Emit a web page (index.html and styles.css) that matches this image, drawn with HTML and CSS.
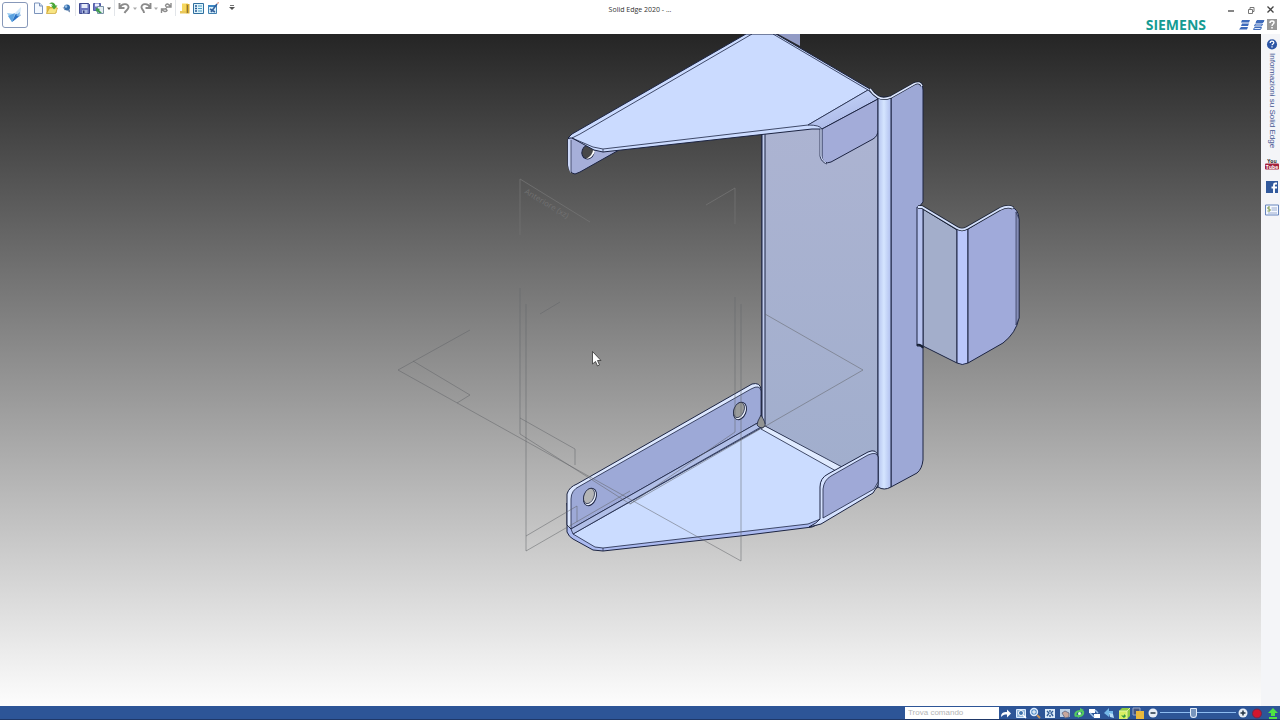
FILE: index.html
```html
<!DOCTYPE html>
<html lang="it">
<head>
<meta charset="utf-8">
<title>Solid Edge 2020</title>
<link rel="stylesheet" href="styles.css">
</head>
<body>
<header class="topbar">
  <div class="tools">
    <button class="app-button" aria-label="Menu applicazione">
      <svg width="24" height="24" viewBox="0 0 24 24"><path d="M4 10l8 1 1 5-4 3z" fill="#9ccdf2"/><path d="M5 13l7-3-3 9z" fill="#5ba2e0"/><path d="M9 19l4-9 5 2z" fill="#2a6fc2"/><path d="M12 10l6-6-1 9z" fill="#cfe7fa"/><path d="M13 12l4-3-1 5z" fill="#7db6e8"/></svg>
    </button>
    <div class="quick" role="toolbar" aria-label="Accesso rapido">
      <button class="tool" aria-label="Nuovo"><svg viewBox="0 0 14 14"><path d="M3.500 2h5l3 3v7.500h-8z" fill="#f4f9ff" stroke="#7b93bb"/><path d="M8.500 2v3h3" fill="#cfe0f5" stroke="#7b93bb"/></svg></button>
      <button class="tool" aria-label="Apri"><svg viewBox="0 0 14 14"><path d="M1.500 12.500V5h3l1 1h6v6z" fill="#e2b93c"/><path d="M1.500 12.500l3-5.500h8l-2 5.500z" fill="#f8e583" stroke="#c39a2e" stroke-width=".6"/><path d="M4 3c3-3 6-1 6.500 1.500h2L9 8.500 6 4.500h2C7 3 6 2.500 4 3z" fill="#48a636"/></svg></button>
      <button class="tool" aria-label="Solid Edge Portal"><svg viewBox="0 0 14 14"><circle cx="8" cy="6.500" r="3" fill="#356fad"/><circle cx="7" cy="5.500" r="1.300" fill="#9cc4e9"/><path d="M3.500 6l2.500 1v2.500zM8 9.500l3-1v3z" fill="#7991b3"/></svg></button>
      <i class="divider"></i>
      <button class="tool" aria-label="Salva"><svg viewBox="0 0 14 14"><path d="M1.500 2.500h9l1 1v9h-10z" fill="#6b75bd" stroke="#3f498f"/><path d="M3.500 3h6v4h-6z" fill="#e6ecf8"/><path d="M4 9h5.500v3.500H4z" fill="#a9b6dc"/><path d="M5 9.500h1.500v2.500H5z" fill="#343d7e"/></svg></button>
      <button class="tool" aria-label="Salva con nome"><svg viewBox="0 0 14 14"><path d="M1.500 2.500h7v7h-7z" fill="#6b75bd" stroke="#525ea6"/><path d="M3 2.500h4v3H3z" fill="#eef"/><path d="M5.500 5.500h6v7h-6z" fill="#e4edf2" stroke="#7b93a6"/><path d="M4 7l4 1-1 1 3 3h-3L5 10 4 11z" fill="#3c9a4b"/></svg></button>
      <button class="caret" aria-label="Opzioni di salvataggio"><svg viewBox="0 0 6 14"><path d="M1 6.500h4L3 9z" fill="#555"/></svg></button>
      <i class="divider"></i>
      <button class="tool" aria-label="Annulla"><svg viewBox="0 0 14 14" fill="none" stroke="#8b8b8b" stroke-width="1.900"><path d="M2.500 2v5h5M3 6.500c2-5 9-4 8.500 0C11 9 9 9 7.500 12"/></svg></button>
      <button class="caret wide" aria-label="Elenco annulla"><svg viewBox="0 0 6 14"><path d="M1 6.500h4L3 9z" fill="#aaa"/></svg></button>
      <button class="tool" aria-label="Ripeti"><svg viewBox="0 0 14 14" fill="none" stroke="#8b8b8b" stroke-width="1.900"><path d="M11.500 2v5h-5M11 6.500C9 1.500 2 2.500 2.500 6.500 3 9 5 9 5 12"/></svg></button>
      <button class="caret" aria-label="Elenco ripeti"><svg viewBox="0 0 6 14"><path d="M1 6.500h4L3 9z" fill="#aaa"/></svg></button>
      <button class="tool" aria-label="Collegamenti"><svg viewBox="0 0 14 14" fill="none" stroke="#8b8b8b" stroke-width="1.400"><path d="M12 2v4H8M11.500 5.500Q8 1 6.500 4.500L8 7M2.500 12V8h4M3 8.500Q6 12 8 9.500L6.500 7"/></svg></button>
      <i class="divider"></i>
      <button class="tool" aria-label="Misura"><svg viewBox="0 0 14 14"><path d="M4 2.500h6v9H4z" fill="#f6d860"/><path d="M8 3h3.500v9.500H8z" fill="#d9ae30"/><path d="M2 10h6v2.500H2z" fill="#e9c75a"/><path d="M9.500 4v8" stroke="#8d7736"/></svg></button>
      <button class="tool" aria-label="Proprietà"><svg viewBox="0 0 14 14"><path d="M1.500 2.500h10v10h-10z" fill="#dff3fb" stroke="#2f6f9f"/><path d="M3 5h2M3 7.500h2M3 10h2" stroke="#285b94" stroke-width="1.300"/><path d="M6 5h4M6 7.500h4M6 10h4" stroke="#4b9cc4"/></svg></button>
      <button class="tool" aria-label="Modifica"><svg viewBox="0 0 14 14"><path d="M2.500 4.500h8v8h-8z" fill="#d7effa" stroke="#4281b1"/><path d="M2 4h9v2H2z" fill="#3d87c3"/><path d="M4 8l5 3M5 11l6-8" fill="none" stroke="#35609a" stroke-width="1.600"/><path d="M11 3l1-2 1 1z" fill="#c75a3c"/></svg></button>
      <button class="caret last" aria-label="Personalizza"><svg viewBox="0 0 6 14"><path d="M1 4.500h4" stroke="#777"/><path d="M0 6h6L3 9z" fill="#555"/></svg></button>
    </div>
  </div>
  <h1 class="title">Solid Edge 2020 - ...</h1>
  <div class="corner">
    <div class="window-buttons">
      <button class="tool" aria-label="Riduci"><svg viewBox="0 0 14 14"><path d="M5 9h6" stroke="#444" stroke-width="1.300"/></svg></button>
      <button class="tool" aria-label="Ripristina"><svg viewBox="0 0 14 14" fill="none" stroke="#777"><path d="M5.500 7.500h4v4h-4zM7 7V5.500h4V9.500h-1"/></svg></button>
      <button class="tool" aria-label="Chiudi"><svg viewBox="0 0 14 14"><path d="M4.500 4.500l6 6M10.500 4.500l-6 6" stroke="#444" stroke-width="1.300"/></svg></button>
    </div>
    <div class="brand-row">
      <span class="brand">SIEMENS</span>
      <button class="tool" aria-label="Barra dei comandi"><svg viewBox="0 0 14 14"><path d="M5 2h8l-1 2.500H4zM5 5.500h7l-1 2.500H4zM4 9h7l-1 2.500H2z" fill="#3f6bbb"/></svg></button>
      <button class="tool" aria-label="Barra multifunzione"><svg viewBox="0 0 14 14" stroke="#3f6bbb"><path d="M6 2.500h7l-1 2H5z" fill="#3f6bbb"/><path d="M4.500 6h7l-1 2h-7zM3.500 9.500h7l-1 2h-7z" fill="#dce8fa"/></svg></button>
      <button class="tool" aria-label="Guida"><svg viewBox="0 0 14 14"><path d="M2 1h10v11H2z" fill="#999"/><path d="M5 5c0-3 4-2.500 4-.5C9 6 7 6 7 8M7 9v1.500" fill="none" stroke="#fff" stroke-width="1.500"/></svg></button>
    </div>
  </div>
</header>

<main class="workspace">
  <svg class="model" viewBox="0 34 1261 672" preserveAspectRatio="xMidYMid slice" role="img" aria-label="Staffa in lamiera">
    <defs>
      <linearGradient id="bend"><stop offset="0" stop-color="#b4c3ee"/><stop offset=".45" stop-color="#d5e5ff"/><stop offset="1" stop-color="#b0bfee"/></linearGradient>
      <linearGradient id="fold" x1="0" y1="0" x2=".6" y2="1"><stop offset="0" stop-color="#cbdcff"/><stop offset="1" stop-color="#a9b5e4"/></linearGradient>
      <linearGradient id="wall" x1="0" y1="0" x2="0" y2="1"><stop offset="0" stop-color="#adb4d2"/><stop offset="1" stop-color="#a1aecd"/></linearGradient>
    </defs>
    <g stroke="#1c2442" stroke-linejoin="round">
      <!-- back wall -->
      <path d="M778 34h22v12z" fill="#929bc5" stroke="none"/>
      <path d="M762 131L878 98V472L842 468 762 426z" fill="url(#wall)"/>
      <path d="M762 132h3v292h-3z" fill="#c0cbed"/>
      <!-- upper shelf -->
      <path d="M568 139V165Q569 173 575 174L580 172 619 150 590 145 572 136z" fill="#a6afd9"/>
      <path d="M568 139V165Q569 171 571 173V140z" fill="#ccd8f8" stroke="none"/>
      <path d="M571 140V172" fill="none" stroke-width=".7"/>
      <ellipse cx="588" cy="152" rx="6" ry="7" transform="rotate(20 588 152)" fill="#484848"/>
      <path d="M586 159Q593 155 593 150L595 151Q593 158 586 159z" fill="#fff" stroke="none"/>
      <path d="M568 138L572 134 746 34H776L870 89 878 99 822 129 812 129 603 152 594 150 572 138z" fill="#cbdbff"/>
      <path d="M572 138L580 134 752 34M773 34L868 90M572 138L593 147 603 149 808 125 868 90" fill="none" stroke-width=".8"/>
      <path d="M603 149v3" stroke-width=".7"/>
      <path d="M808 125L868 90 878 99 822 129Q820 125 808 125z" fill="url(#fold)" stroke-width=".8"/>
      <path d="M822 129L878 99V130Q878 136 873 139L831 162Q823 165 822 157z" fill="#a3acd9"/>
      <path d="M820 129V156Q821 162 827 164" fill="none" stroke-width=".8"/>
      <path d="M821 129V156Q822 161 826 163" fill="none" stroke="#d0dcf8"/>
      <!-- side flange -->
      <path d="M891 97L914 83Q923 80 923 90V202L919 207V345L923 347V460Q922 469 917 473L891 487z" fill="#9da8d6"/>
      <path d="M878 97L891 97V487Q884 491 878 487z" fill="url(#bend)"/>
      <path d="M870 89Q873 94 878 97 883 100 891 97L914 84Q920 81 922 86" fill="none" stroke="#172034" stroke-width="3"/>
      <path d="M870 89Q873 94 878 97 883 100 891 97L914 84Q920 81 922 86" fill="none" stroke="#dfe8ff" stroke-width="1.500"/>
      <!-- outer tab -->
      <path d="M923 209L957 230V363L923 346z" fill="#a3aecb"/>
      <path d="M917 207H923V346H917z" fill="#b6c2ef"/>
      <path d="M957 229H968V363Q962 366 957 363z" fill="#bac7fb"/>
      <path d="M968 229L1002 208Q1019 203 1019 221V318Q1016 333 1003 343L968 363z" fill="#a0aada"/>
      <path d="M1016 212V325L1019 318V219z" fill="#858db7" stroke-width=".6"/>
      <path d="M918 207L922 207 957 228Q962 231 967 228L1000 209Q1008 205 1013 208" fill="none" stroke="#1b2335" stroke-width="3.500"/>
      <path d="M918 207L922 207 957 228Q962 231 967 228L1000 209Q1008 205 1013 208" fill="none" stroke="#d4e0fc" stroke-width="2"/>
      <path d="M917 345Q921 344 923 348" fill="none" stroke="#172034" stroke-width="2"/>
      <!-- lower shelf -->
      <path d="M567 503V532Q569 537 573 539L593 550 603 551 740 536 812 527 821 523 878 487 842 468 761 424 570 526z" fill="#abbaf0"/>
      <path d="M573 534L761 428 838 470 823 487V518L808 524 603 548 595 547z" fill="#cbdcff" stroke-width=".8"/>
      <path d="M765 426L842 467 836 471 761 429z" fill="#e0ebff" stroke-width=".8"/>
      <path d="M567 503V494Q569 487 577 484L752 384Q760 382 761 389V420L571 529 567 525z" fill="#dce7ff"/>
      <path d="M571 529V499Q571 490 580 486L751 389Q760 384 761 391V421z" fill="#9da9d7" stroke-width=".8"/>
      <path d="M571 529L761 421V427L573 534z" fill="#b1bfe8" stroke-width=".8"/>
      <path d="M603 548v3" stroke-width=".7"/>
      <g fill="#f0f5ff"><ellipse cx="590" cy="497" rx="6" ry="9" transform="rotate(22 590 497)"/><ellipse cx="740" cy="411" rx="6" ry="9" transform="rotate(22 740 411)"/></g>
      <g stroke-width=".7"><ellipse cx="589" cy="496" rx="5" ry="8" transform="rotate(22 589 496)" fill="#b4b5b6"/><ellipse cx="739" cy="410" rx="5" ry="8" transform="rotate(22 739 410)" fill="#999b9b"/></g>
      <path d="M820 519V487Q820 478 828 474L868 452Q877 448 878 457V485L873 493 821 524 809 527Q817 523 820 519z" fill="#d5e2ff"/>
      <path d="M823 518V489Q824 480 831 476L868 455Q877 451 878 457V482L874 489z" fill="#9fa9d7" stroke-width=".8"/>
      <path d="M761 415Q766 423 765 426 761 430 757 425 757 422 761 415z" fill="#929493" stroke-width=".8"/>
    </g>
    <!-- reference planes -->
    <g fill="none" stroke="#626569" stroke-opacity=".65" stroke-width=".8">
      <path d="M520 288V434L630 504 735 432V297M520 418L575 449V465"/>
      <path d="M526 304V551L630 491M741 304V561L398 370 470 330M413 361L470 395 457 403M526 536L577 506V522"/>
      <path d="M765 314L863 370 630 504M540 314L560 302"/>
    </g>
    <path d="M520 235V179L590 222M706 205L735 188V224" fill="none" stroke="#707070" stroke-width=".9"/>
    <text class="plane-label" x="524" y="193" transform="rotate(31 524 193)">Anteriore (xz)</text>
    <path d="M592.500 351.500V364l3-2.500 2 4.500 2-1-2-4.500h3.500z" fill="#fff" stroke="#333" stroke-width=".8"/>
  </svg>
  <aside class="sidebar">
    <button class="side-tab">
      <svg width="14" height="14" viewBox="0 0 14 14"><circle cx="7" cy="7" r="5.500" fill="#2c55a5"/><path d="M5 5.500c0-3 4-2.500 4-.5C9 6.500 7 6.500 7 8M7 9v1.500" fill="none" stroke="#fff" stroke-width="1.400"/></svg>
      <span class="side-label">Informazioni su Solid Edge</span>
    </button>
    <button class="side-icon" aria-label="YouTube"><svg width="14" height="14" viewBox="0 0 14 14"><rect y="6.500" width="14" height="6" rx="1" fill="#a3223c"/><text class="tube" x="7" y="6" fill="#333">You</text><text class="tube" x="7" y="11.500" fill="#fff">Tube</text></svg></button>
    <button class="side-icon" aria-label="Facebook"><svg width="14" height="14" viewBox="0 0 14 14"><path d="M1 1h12v12H1z" fill="#31599c"/><path d="M12 3.500h-1.500Q9 3.500 9 5v8M6.500 7.500H12" fill="none" stroke="#fff" stroke-width="1.900"/></svg></button>
    <button class="side-icon" aria-label="Notizie"><svg width="14" height="14" viewBox="0 0 14 14"><path d="M.5 2h13v10H.5z" fill="#f4f8ff" stroke="#6685bd"/><path d="M5 4H3v2h2v2H2.500" fill="none" stroke="#76933f"/><path d="M6.500 5H12M6.500 7H12M3 10h9" stroke="#9aacd0"/></svg></button>
  </aside>
</main>

<footer class="statusbar">
  <input class="search" type="text" placeholder="Trova comando" aria-label="Trova comando">
  <div class="view-tools">
    <button class="tool" aria-label="Vai"><svg viewBox="0 0 14 14"><path d="M2 11c0-4 2-5 6-5V3.500l4 4-4 4V8.500C5 8.500 4 9 2 11z" fill="#fff"/></svg></button>
    <button class="tool" aria-label="Zoom area"><svg viewBox="0 0 14 14"><path d="M2.500 3.500h9v8h-9z" fill="#92b6da" stroke="#dcecff"/><circle cx="7" cy="7" r="2.500" fill="#3c71ae" stroke="#fff"/><path d="M9 9l3 3" stroke="#fff" stroke-width="1.500"/></svg></button>
    <button class="tool" aria-label="Zoom"><svg viewBox="0 0 14 14"><circle cx="6" cy="6" r="3.500" fill="#578fc7" stroke="#dcecff" stroke-width="1.400"/><path d="M6 4v4M4 6h4" stroke="#fff"/><path d="M9 9l3 3" stroke="#c7935e" stroke-width="2"/></svg></button>
    <button class="tool" aria-label="Adatta"><svg viewBox="0 0 14 14"><path d="M2 3h10v9H2z" fill="#dcebf9"/><path d="M4 5l2 2-2 3M10 5L8 7l2 3M7 4v2M7 9v2" fill="none" stroke="#315d98" stroke-width="1.400"/></svg></button>
    <button class="tool" aria-label="Panoramica"><svg viewBox="0 0 14 14"><path d="M2 3h10v8H2z" fill="#bdd3e9"/><path d="M4 7l3-2 4 2v4l-4 1z" fill="#c8a79b" stroke="#5b6682" stroke-width=".8"/></svg></button>
    <button class="tool" aria-label="Ruota"><svg viewBox="0 0 14 14"><path d="M3 11c-2-4 1-7 5-7V2l4 2-4 3V6C5 6 4 8 5 10zM12 5c1 4-2 6-5 6v1L4 10l3-2v1c2 0 3-2 3-4z" fill="#53c95f"/><circle cx="7.500" cy="7.500" r="1.500" fill="#e8ffe9"/></svg></button>
    <button class="tool" aria-label="Viste"><svg viewBox="0 0 14 14"><path d="M2 3h6v4H2zM7 8h6v4H7z" fill="#fff"/><path d="M3 7l4 4M8 4l3 3" stroke="#9fc3e8" stroke-width="1.500"/></svg></button>
    <button class="tool" aria-label="Vista precedente"><svg viewBox="0 0 14 14"><path d="M2 7l5-5v3h4v3H7v3z" fill="#75b8e7"/><path d="M7 7l4 1 1 4-4-1z" fill="#b9e0f9"/></svg></button>
    <button class="tool" aria-label="Stile di vista"><svg viewBox="0 0 14 14"><path d="M2 5l3-3h8v8l-3 3H2z" fill="#8fca44"/><path d="M2 5h8v8H2z" fill="#d8ef62"/><path d="M2 5h8v8M10 5l3-3" fill="none" stroke="#edf7b4" stroke-width=".8"/><path d="M4 9.500h3V8l2 2-2 2z" fill="#319545"/></svg></button>
    <button class="tool" aria-label="Sfondo"><svg viewBox="0 0 14 14"><path d="M2 2h7v7H2z" fill="#45567e" stroke="#9aa8c5"/><path d="M5 5h8v8H5z" fill="#e9b93c"/></svg></button>
    <button class="tool" aria-label="Riduci zoom"><svg viewBox="0 0 14 14"><circle cx="7" cy="7" r="4.500" fill="#e8eef5"/><path d="M4.500 7h5" stroke="#234" stroke-width="1.500"/></svg></button>
  </div>
  <input class="zoom-slider" type="range" min="0" max="100" value="44" aria-label="Zoom">
  <div class="end-tools">
    <button class="tool" aria-label="Aumenta zoom"><svg viewBox="0 0 14 14"><circle cx="7" cy="7" r="4.500" fill="#e8eef5"/><path d="M4.500 7h5M7 4.500v5" stroke="#234" stroke-width="1.500"/></svg></button>
    <button class="tool" aria-label="Registra"><svg viewBox="0 0 14 14"><circle cx="6" cy="7.500" r="4.500" fill="#d3162d" stroke="#6c294e"/></svg></button>
    <button class="tool" aria-label="Carica"><svg viewBox="0 0 14 14"><path d="M7 2l5 5H9v3H5V7H2zM3 11h8v2H3z" fill="#4ee342"/></svg></button>
  </div>
</footer>
</body>
</html>
```

FILE: styles.css
```css
* { box-sizing: border-box; }

body {
  margin: 0;
  height: 100vh;
  display: flex;
  flex-direction: column;
  overflow: hidden;
  background: #fff;
  font-family: "Open Sans", "Noto Sans", sans-serif;
}

button {
  margin: 0;
  padding: 0;
  border: 0;
  background: none;
  font: inherit;
  color: inherit;
}

svg { display: block; }

.topbar {
  flex: none;
  display: grid;
  grid-template-columns: 1fr auto 1fr;
  align-items: start;
  min-height: 34px;
}

.tools {
  display: flex;
  gap: 3px;
  padding: 2px 0 0 2px;
}

.app-button {
  width: 26px;
  height: 26px;
  border: 1px solid #8798b9;
  border-radius: 3px;
}

.quick {
  display: flex;
  align-items: center;
  height: 12px;
}

.tool {
  flex: none;
  width: 14px;
  height: 14px;
}

.caret {
  width: 6px;
  height: 14px;
}

.caret svg { width: 6px; margin: 0 auto; }
.wide { width: 8px; }
.last { margin-left: 9px; }

.divider {
  width: 1px;
  height: 16px;
  margin: 0 2px;
  background: #e2e5e9;
}

.title {
  margin: 0;
  padding-top: 4px;
  font-size: 7px;
  font-weight: 400;
  line-height: 12px;
  color: #333;
}

.corner {
  display: flex;
  flex-direction: column;
  align-items: flex-end;
  padding-top: 2px;
}

.window-buttons {
  display: flex;
  gap: 6px;
  padding-right: 3px;
}

.brand-row {
  display: flex;
  align-items: center;
  height: 18px;
  padding-right: 1px;
}

.brand {
  margin-right: 31px;
  font-size: 14px;
  font-weight: 700;
  line-height: 18px;
  color: #159b93;
}

.workspace {
  flex: 1;
  min-height: 0;
  display: flex;
}

.model {
  flex: 1;
  min-width: 0;
  height: 100%;
  background: linear-gradient(#252525, #fdfdfd);
}

.plane-label {
  font-size: 8px;
  fill: #717171;
}

.sidebar {
  flex: none;
  width: 19px;
  padding: 4px 0 0 3px;
  display: flex;
  flex-direction: column;
  align-items: center;
  gap: 9px;
  background: #f4f5f8;
}

.side-tab {
  display: flex;
  flex-direction: column;
  align-items: center;
  gap: 2px;
  height: 110px;
}

.side-label {
  writing-mode: vertical-rl;
  white-space: nowrap;
  font-family: "Liberation Sans", sans-serif;
  font-size: 8px;
  line-height: 14px;
  color: #3f5290;
}

.side-icon { height: 14px; }

.tube {
  font-size: 5px;
  font-weight: 700;
  text-anchor: middle;
}

.statusbar {
  flex: none;
  display: flex;
  align-items: center;
  justify-content: flex-end;
  height: 14px;
  border-bottom: 1px solid #1f3868;
  background: #2d5597;
}

.search {
  width: 94px;
  height: 12px;
  padding: 0 3px;
  border: 0;
  background: #fff;
  font: 8px/12px "Liberation Sans", sans-serif;
}

.search::placeholder { color: #b5b5b5; opacity: 1; }

.view-tools {
  width: 161px;
  display: flex;
  justify-content: space-between;
}

.end-tools {
  width: 44px;
  display: flex;
  justify-content: space-between;
}

.zoom-slider {
  appearance: none;
  width: 76px;
  height: 12px;
  margin: 0;
  background: linear-gradient(#8ebcf0, #8ebcf0) center / 100% 1px no-repeat;
}

.zoom-slider::-webkit-slider-thumb {
  appearance: none;
  width: 7px;
  height: 10px;
  border: 1px solid #e5eef9;
  border-radius: 1px 1px 4px 4px;
  background: #7895bd;
}
```
